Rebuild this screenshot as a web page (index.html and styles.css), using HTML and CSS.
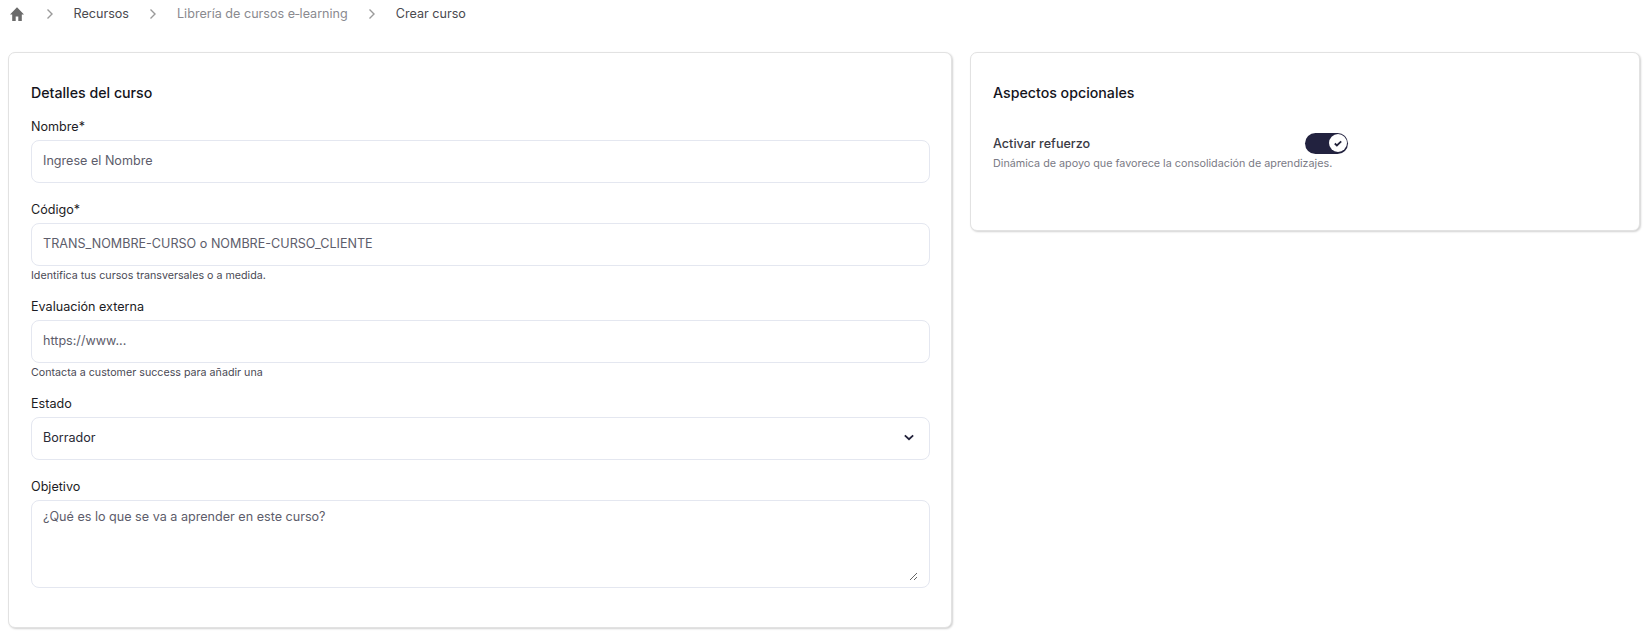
FILE: index.html
```html
<!DOCTYPE html>
<html lang="es">
<head>
<meta charset="utf-8">
<title>Crear curso</title>
<link rel="stylesheet" href="styles.css">
</head>
<body>
<nav class="crumbs">
  <svg class="home" viewBox="0 0 14 14" width="14" height="14"><path d="M5.700 14V9.500h2.600V14h3.500V7.500H14L7 .3 0 7.500h2.200V14z" fill="#6b6b6b"/></svg>
  <svg class="sep" viewBox="0 0 8 12" width="8" height="12"><path d="M1.500 1.500 6 6l-4.500 4.500" fill="none" stroke="#9a9a9a" stroke-width="1.400"/></svg>
  <a class="crumb">Recursos</a>
  <svg class="sep" viewBox="0 0 8 12" width="8" height="12"><path d="M1.500 1.500 6 6l-4.500 4.500" fill="none" stroke="#9a9a9a" stroke-width="1.400"/></svg>
  <a class="crumb muted">Librería de cursos e‑learning</a>
  <svg class="sep" viewBox="0 0 8 12" width="8" height="12"><path d="M1.500 1.500 6 6l-4.500 4.500" fill="none" stroke="#9a9a9a" stroke-width="1.400"/></svg>
  <span class="crumb">Crear curso</span>
</nav>
<main class="columns">
  <section class="card card-main">
    <h2 class="title">Detalles del curso</h2>
    <div class="field field-first">
      <label class="label">Nombre*</label>
      <div class="input placeholder">Ingrese el Nombre</div>
    </div>
    <div class="field field-code">
      <label class="label">Código*</label>
      <div class="input placeholder">TRANS_NOMBRE-CURSO o NOMBRE-CURSO_CLIENTE</div>
      <p class="hint">Identifica tus cursos transversales o a medida.</p>
    </div>
    <div class="field field-tight">
      <label class="label">Evaluación externa</label>
      <div class="input placeholder">https://www...</div>
      <p class="hint">Contacta a customer success para añadir una</p>
    </div>
    <div class="field field-tight">
      <label class="label">Estado</label>
      <div class="input select">
        <span>Borrador</span>
        <svg viewBox="0 0 12 8" width="10" height="7"><path d="M1 1.500 6 6l5-4.500" fill="none" stroke="#22223a" stroke-width="2.200"/></svg>
      </div>
    </div>
    <div class="field field-code">
      <label class="label">Objetivo</label>
      <div class="input area placeholder"><div class="area-text">¿Qué es lo que se va a aprender en este curso?</div></div>
    </div>
  </section>
  <section class="card card-side">
    <h2 class="title">Aspectos opcionales</h2>
    <div class="option">
      <div class="option-row">
        <span class="option-name">Activar refuerzo</span>
        <span class="switch"><span class="knob"><svg viewBox="0 0 10 8" width="8" height="7"><path d="M1 4l2.600 2.500L9 1.200" fill="none" stroke="#22223a" stroke-width="2.200"/></svg></span></span>
      </div>
      <p class="option-desc">Dinámica de apoyo que favorece la consolidación de aprendizajes.</p>
    </div>
  </section>
</main>
</body>
</html>
```
FILE: styles.css
```css
* { box-sizing: border-box; }
html, body { height: 100%; }
body {
  margin: 0;
  background: #fff;
  color: #1c1c24;
  font-family: Inter, "Liberation Sans", sans-serif;
  font-size: 12.6px;
  overflow: hidden;
}
.crumbs {
  display: flex;
  align-items: center;
  height: 28px;
  padding-left: 10px;
}
.home { margin-right: 21.5px; }
.crumb { color: #4a4a4f; font-size: 12.6px; line-height: 28px; }
.muted { color: #8a8a8f; }
.sep { margin: 0 20px 0 0; }
.crumb + .sep { margin-left: 20px; }
.columns {
  display: grid;
  grid-template-columns: 944px 670px;
  gap: 18px;
  align-items: start;
  padding: 24px 0 0 8px;
}
.card {
  background: #fff;
  border: 1px solid #e2e2e2;
  border-radius: 7px;
  box-shadow: 1px 1px 2px rgba(0, 0, 0, .18);
  padding: 29px 21px 0 22px;
}
.card-main { height: 576px; }
.card-side { height: 179px; }
.title {
  margin: 0;
  font-size: 14.2px;
  font-weight: 500;
  line-height: 22px;
  color: #14141c;
}
.field-first { margin-top: 12px; }
.field-code { margin-top: 16px; }
.field-tight { margin-top: 13px; }
.label {
  display: block;
  font-size: 12.6px;
  line-height: 21px;
  margin-bottom: 3px;
  color: #1c1c24;
}
.input {
  display: flex;
  align-items: center;
  height: 43px;
  padding: 0 11px 2px;
  border: 1px solid #e4e7f0;
  border-radius: 8px;
  background: #fff;
  font-size: 12.6px;
  color: #2a2a35;
}
.placeholder { color: #5d5d6b; }
.select { justify-content: space-between; padding-right: 15px; }
.area {
  align-items: stretch;
  height: 88px;
  padding: 8px 11px 6px;
}
.area-text {
  flex: 1;
  resize: vertical;
  overflow: auto;
}
.hint {
  margin: 2px 0 0;
  font-size: 10.7px;
  line-height: 15px;
  color: #4a4a55;
}
.option { margin-top: 28px; }
.option-row {
  display: flex;
  align-items: center;
  justify-content: space-between;
  width: 355px;
  height: 22px;
}
.option-name { font-size: 12.6px; font-weight: 500; color: #3a3a44; }
.option-desc {
  margin: 2px 0 0;
  font-size: 10.77px;
  line-height: 15px;
  color: #7a7a85;
}
.switch {
  display: flex;
  justify-content: flex-end;
  align-items: center;
  width: 43px;
  height: 21px;
  padding-right: 1px;
  border-radius: 11px;
  background: #22223f;
}
.knob {
  display: flex;
  align-items: center;
  justify-content: center;
  width: 18px;
  height: 18px;
  border-radius: 50%;
  background: #fff;
}
```
